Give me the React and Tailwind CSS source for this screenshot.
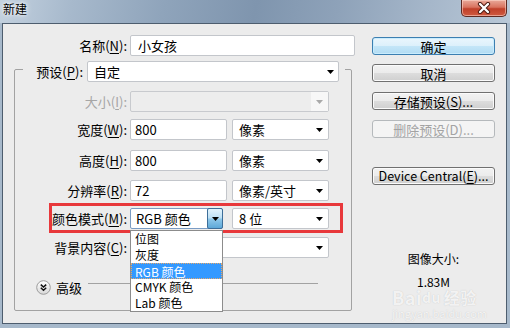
import React from "react";

function Arrow({ color = "#000" }) {
  return (
    <svg width="7" height="4" viewBox="0 0 7 4" className="shrink-0">
      <path d="M0 0H7L3.5 4Z" fill={color} />
    </svg>
  );
}

function U({ children }) {
  return <span className="underline underline-offset-[2px] decoration-[1px]">{children}</span>;
}

function CloseBtn() {
  return (
    <div className="mr-[3px] w-[46px] h-[17px] rounded-b-[5px] border border-t-0 border-[#5e2a22] bg-[linear-gradient(#e9a99a_0%,#d9735f_45%,#c0402a_55%,#cf5a40_100%)] shadow-[inset_0_0_0_1px_rgba(255,220,210,0.55)] flex items-center justify-center">
      <svg width="14" height="12" viewBox="0 0 14 12">
        <path d="M3 2L11 10M11 2L3 10" stroke="#4a1810" strokeWidth="4.2" strokeLinecap="round" />
        <path d="M3 2L11 10M11 2L3 10" stroke="#fff" strokeWidth="2.4" strokeLinecap="round" />
      </svg>
    </div>
  );
}

function Btn({ children, kind = "normal", className = "" }) {
  if (kind === "default") {
    return (
      <div className={"h-[18px] w-[123px] rounded-[3px] border border-[#3c7fb1] bg-[linear-gradient(#eaf6fd_0%,#dcf0fb_50%,#c4e6f8_50%,#b2dcf3_100%)] shadow-[inset_0_0_0_1px_#c9ecfd] flex items-center justify-center text-[13px] leading-none " + className}>
        {children}
      </div>
    );
  }
  if (kind === "disabled") {
    return (
      <div className={"h-[18px] w-[123px] rounded-[3px] border border-[#b5b9bc] bg-[#f4f4f4] flex items-center justify-center text-[13px] leading-none text-[#a3a3a3] " + className}>
        {children}
      </div>
    );
  }
  return (
    <div className={"h-[18px] w-[123px] rounded-[3px] border border-[#707070] bg-[linear-gradient(#f2f2f2_0%,#ebebeb_50%,#dddddd_50%,#cfcfcf_100%)] shadow-[inset_0_0_0_1px_#fbfbfb] flex items-center justify-center leading-none " + className}>
      {children}
    </div>
  );
}

function Row({ label, children, className = "", gray = false }) {
  return (
    <div className={"flex items-center h-[21px] relative " + className}>
      <div className={"w-[112px] text-right text-[13px] leading-[21px] whitespace-nowrap " + (gray ? "text-[#a6a6a6]" : "text-black")}>
        {label}
      </div>
      <div className="ml-[3px] flex items-center">{children}</div>
    </div>
  );
}

export default function App() {
  return (
    <div className="w-[510px] h-[328px] overflow-hidden relative flex flex-col bg-[#a7b9cb] font-['Noto_Sans_CJK_SC',sans-serif] text-black">
      {/* Title bar */}
      <div className="h-[23px] shrink-0 flex items-start justify-between bg-[linear-gradient(100deg,#c3d1df_0%,#a7b9cc_14%,#8fa4bb_32%,#7f95ae_50%,#8ea2b9_66%,#a6b7ca_84%,#b9c8d7_100%)]">
        <div className="pl-[3px] text-[12px] leading-[18px] [text-shadow:0_0_6px_#ffffff,0_0_3px_#ffffff]">新建</div>
        <CloseBtn />
      </div>

      {/* Client area */}
      <div className="flex-1 ml-[2px] mr-[3px] mb-[4px] border border-[#4d5d6e] bg-[#ececec] flex">
        {/* Left column */}
        <div className="w-[352px] flex flex-col">
          {/* Name row */}
          <div className="mt-[11px] flex items-center h-[21px]">
            <div className="w-[124px] text-right text-[13px] leading-[21px]">
              名称(<U>N</U>):
            </div>
            <div className="ml-[3px] w-[225px] h-[21px] bg-white border border-[#c3c6cb] rounded-[2px] flex items-center pl-[7px] text-[13px]">
              小女孩
            </div>
          </div>

          {/* Preset group */}
          <fieldset className="ml-[11px] w-[338px] border border-[#a2a2a2] rounded-[2px] pb-[15px]">
            <legend className="ml-[8px] pt-[5px]">
              <div className="flex items-center pr-[6px]">
                <div className="w-[60px] text-right text-[13px] leading-[21px] whitespace-nowrap">
                  预设(<U>P</U>):
                </div>
                <div className="ml-[4px] w-[252px] h-[21px] bg-white border border-[#c3c6cb] rounded-[2px] flex items-center justify-between pl-[6px] pr-[4px] text-[13px]">
                  <span>自定</span>
                  <Arrow />
                </div>
              </div>
            </legend>

            <Row label={<>大小(<U>I</U>):</>} gray className="mt-[9px]">
              <div className="w-[199px] h-[21px] border border-[#c8cace] rounded-[2px] bg-[#ededed] flex items-center justify-end">
                <div className="w-[17px] h-[19px] bg-[#f7f7f7] flex items-center justify-center">
                  <Arrow color="#a9a9a9" />
                </div>
              </div>
            </Row>

            <Row label={<>宽度(<U>W</U>):</>} className="mt-[7px]">
              <div className="w-[97px] h-[21px] bg-white border border-[#c3c6cb] rounded-[2px] flex items-center pl-[4px] text-[13px]">800</div>
              <div className="ml-[5px] w-[97px] h-[21px] bg-white border border-[#c3c6cb] rounded-[2px] flex items-center justify-between pl-[6px] pr-[5px] text-[13px]">
                <span>像素</span>
                <Arrow />
              </div>
            </Row>

            <Row label={<>高度(<U>H</U>):</>} className="mt-[10px]">
              <div className="w-[97px] h-[21px] bg-white border border-[#c3c6cb] rounded-[2px] flex items-center pl-[4px] text-[13px]">800</div>
              <div className="ml-[5px] w-[97px] h-[21px] bg-white border border-[#c3c6cb] rounded-[2px] flex items-center justify-between pl-[6px] pr-[5px] text-[13px]">
                <span>像素</span>
                <Arrow />
              </div>
            </Row>

            <Row label={<>分辨率(<U>R</U>):</>} className="mt-[9px]">
              <div className="w-[97px] h-[21px] bg-white border border-[#c3c6cb] rounded-[2px] flex items-center pl-[4px] text-[13px]">72</div>
              <div className="ml-[5px] w-[97px] h-[21px] bg-white border border-[#c3c6cb] rounded-[2px] flex items-center justify-between pl-[6px] pr-[5px] text-[13px]">
                <span>像素/英寸</span>
                <Arrow />
              </div>
            </Row>

            <Row label={<>颜色模式(<U>M</U>):</>} className="mt-[7px]">
              <div className="relative w-[93px] h-[21px] bg-white border border-[#7a9cc4] rounded-[2px] flex items-center justify-between pl-[5px] text-[13px]">
                <span>RGB 颜色</span>
                <div className="w-[16px] h-[21px] -mr-px border border-[#3d6e99] rounded-[2px] bg-[linear-gradient(#e3f3fc_0%,#bfe1f5_45%,#8cc6e9_55%,#5da8d8_100%)] flex items-center justify-center">
                  <Arrow />
                </div>
                {/* Dropdown list */}
                <div className="absolute z-20 left-[-1px] top-[21px] w-[93px] border border-[#8c8c8c] bg-white text-[12px]">
                  <div className="h-[16px] leading-[16px] pl-[4px]">位图</div>
                  <div className="h-[16px] leading-[16px] pl-[4px]">灰度</div>
                  <div className="h-[16px] leading-[15px] pl-[3px] bg-[#3399ff] text-white border border-dotted border-[#e6a86a]">RGB 颜色</div>
                  <div className="h-[16px] leading-[16px] pl-[4px]">CMYK 颜色</div>
                  <div className="h-[16px] leading-[16px] pl-[4px]">Lab 颜色</div>
                </div>
              </div>
              <div className="ml-[9px] w-[97px] h-[21px] bg-white border border-[#c3c6cb] rounded-[2px] flex items-center justify-between pl-[6px] pr-[5px] text-[13px]">
                <span>8 位</span>
                <Arrow />
              </div>
              {/* red highlight */}
              <div className="absolute z-10 left-[34px] top-[-5px] w-[294px] h-[30px] border-[3px] border-[#e8383b] pointer-events-none" />
            </Row>

            <Row label={<>背景内容(<U>C</U>):</>} className="mt-[8px]">
              <div className="w-[199px] h-[21px] bg-white border border-[#c3c6cb] rounded-[2px] flex items-center justify-end pr-[5px]">
                <Arrow />
              </div>
            </Row>

            {/* Advanced */}
            <div className="mt-[22px] flex items-start h-[15px]">
              <svg width="15" height="15" viewBox="0 0 15 15" className="ml-[21px] shrink-0">
                <defs>
                  <linearGradient id="cg" x1="0" y1="0" x2="0" y2="1">
                    <stop offset="0" stopColor="#ffffff" />
                    <stop offset="1" stopColor="#d8d8d8" />
                  </linearGradient>
                </defs>
                <circle cx="7.5" cy="7.5" r="6.8" fill="url(#cg)" stroke="#9c9c9c" strokeWidth="1" />
                <path d="M4.8 4.6L7.5 7L10.2 4.6M4.8 7.8L7.5 10.2L10.2 7.8" fill="none" stroke="#111" strokeWidth="1.5" />
              </svg>
              <div className="ml-[5px] text-[13px] leading-[15px]">高级</div>
              <div className="ml-[6px] mr-[33px] mt-[3px] flex-1 h-px bg-[#a2a2a2]" />
            </div>
          </fieldset>
        </div>

        {/* Right column */}
        <div className="ml-[17px] mt-[13px] w-[123px] flex flex-col items-center">
          <Btn kind="default">确定</Btn>
          <Btn className="mt-[9px] text-[13px]">取消</Btn>
          <Btn className="mt-[10px] text-[13px]">
            存储预设(<U>S</U>)...
          </Btn>
          <Btn kind="disabled" className="mt-[10px]">
            删除预设(<U>D</U>)...
          </Btn>
          <Btn className="mt-[29px] text-[12.5px]">
            Device Central(<U>E</U>)...
          </Btn>
          <div className="mt-[67px] text-[12px] leading-[14px]">图像大小:</div>
          <div className="mt-[9px] text-[12px] leading-[14px]">1.83M</div>
        </div>
      </div>

      {/* Baidu watermark */}
      <div className="absolute left-[392px] top-[289px] flex flex-col items-start text-white/80 pointer-events-none">
        <div className="flex items-end text-[18px] font-bold leading-[17px] tracking-[0.5px] [text-shadow:0_0_1px_#bbbbbb]">
          <span>Bai</span>
          <span className="text-[14px]">du</span>
          <span className="ml-[3px] text-[16px]">经验</span>
        </div>
        <div className="text-[11px] leading-[11px] mt-[2px] [text-shadow:0_0_1px_#bbbbbb]">jingyan.baidu.com</div>
      </div>
    </div>
  );
}
